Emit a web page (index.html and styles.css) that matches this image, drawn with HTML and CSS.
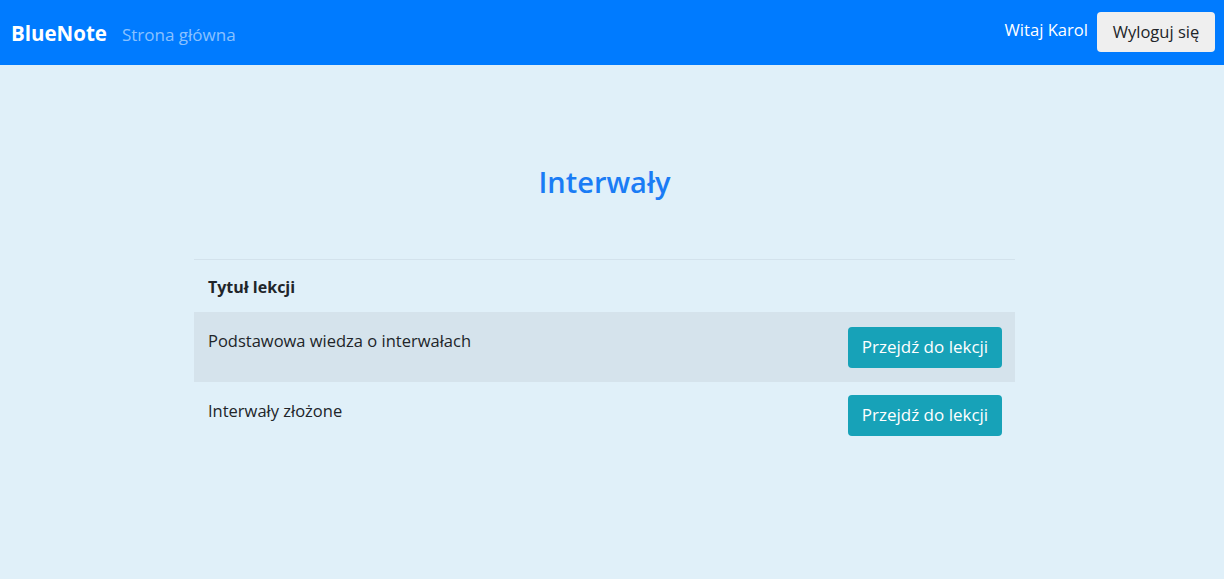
FILE: index.html
```html
<!DOCTYPE html>
<html lang="pl">
<head>
<meta charset="utf-8">
<title>BlueNote</title>
<link rel="stylesheet" href="styles.css">
</head>
<body>
<nav class="navbar">
  <div class="nav-left">
    <a class="brand" href="#">BlueNote</a>
    <a class="nav-link" href="#">Strona główna</a>
  </div>
  <div class="nav-right">
    <span class="greeting">Witaj Karol</span>
    <button class="btn btn-light">Wyloguj się</button>
  </div>
</nav>
<main class="main">
  <h2 class="title">Interwały</h2>
  <table class="lessons">
    <thead>
      <tr><th>Tytuł lekcji</th><th></th></tr>
    </thead>
    <tbody>
      <tr class="odd">
        <td>Podstawowa wiedza o interwałach</td>
        <td class="action"><button class="btn btn-info">Przejdź do lekcji</button></td>
      </tr>
      <tr class="even">
        <td>Interwały złożone</td>
        <td class="action"><button class="btn btn-info">Przejdź do lekcji</button></td>
      </tr>
    </tbody>
  </table>
</main>
</body>
</html>
```
FILE: styles.css
```css
* { box-sizing: border-box; }
html, body { margin: 0; padding: 0; }
body {
  background: #e0f0f9;
  font-family: "Open Sans", "Noto Sans", sans-serif;
  font-size: 16px;
  color: #212529;
  min-height: 579px;
}
.navbar {
  height: 65px;
  background: #007bff;
  display: flex;
  align-items: center;
  justify-content: space-between;
  padding: 0 9px 0 11px;
}
.nav-left { display: flex; align-items: center; gap: 15px; }
.brand {
  color: #fff;
  font-weight: 700;
  font-size: 20.5px;
  text-decoration: none;
}
.nav-link {
  color: rgba(255,255,255,0.55);
  font-size: 17px;
  text-decoration: none;
  padding-top: 3px;
}
.nav-right { display: flex; align-items: center; gap: 9px; padding-bottom: 2px; }
.greeting { color: #fff; font-size: 16.6px; padding-bottom: 4px; }
.btn {
  font-family: inherit;
  border: none;
  border-radius: 4px;
  font-size: 16px;
  cursor: pointer;
  line-height: 24px;
}
.btn-light {
  background: #efefef;
  color: #212529;
  width: 118px;
  height: 40px;
  padding: 0;
  font-size: 16.5px;
}
.main {
  padding: 0 15px 0 0;
  display: flex;
  flex-direction: column;
  align-items: center;
}
.title {
  margin: 97px 0 0;
  height: 97px;
  font-size: 29px;
  font-weight: 600;
  color: #1a7cf5;
  line-height: 40px;
}
.lessons {
  width: 821px;
  border-collapse: collapse;
}
.lessons th {
  text-align: left;
  font-weight: 700;
  border-top: 1px solid #d3e2ec;
  padding: 14px 14px 11px;
  height: 52px;
  line-height: 24px;
}
.lessons td {
  padding: 17px 14px 13px;
  vertical-align: top;
  line-height: 24px;
  height: 70px;
  font-size: 16.5px;
}
.lessons tr.odd td { background: #d5e3ec; }
.lessons td.action { text-align: right; padding-top: 15px; padding-right: 13px; }
.lessons tr.even td.action { padding-top: 13px; }
.btn-info {
  background: #17a2b8;
  color: #fff;
  width: 154px;
  height: 41px;
  padding: 0;
  font-size: 17px;
}
```
